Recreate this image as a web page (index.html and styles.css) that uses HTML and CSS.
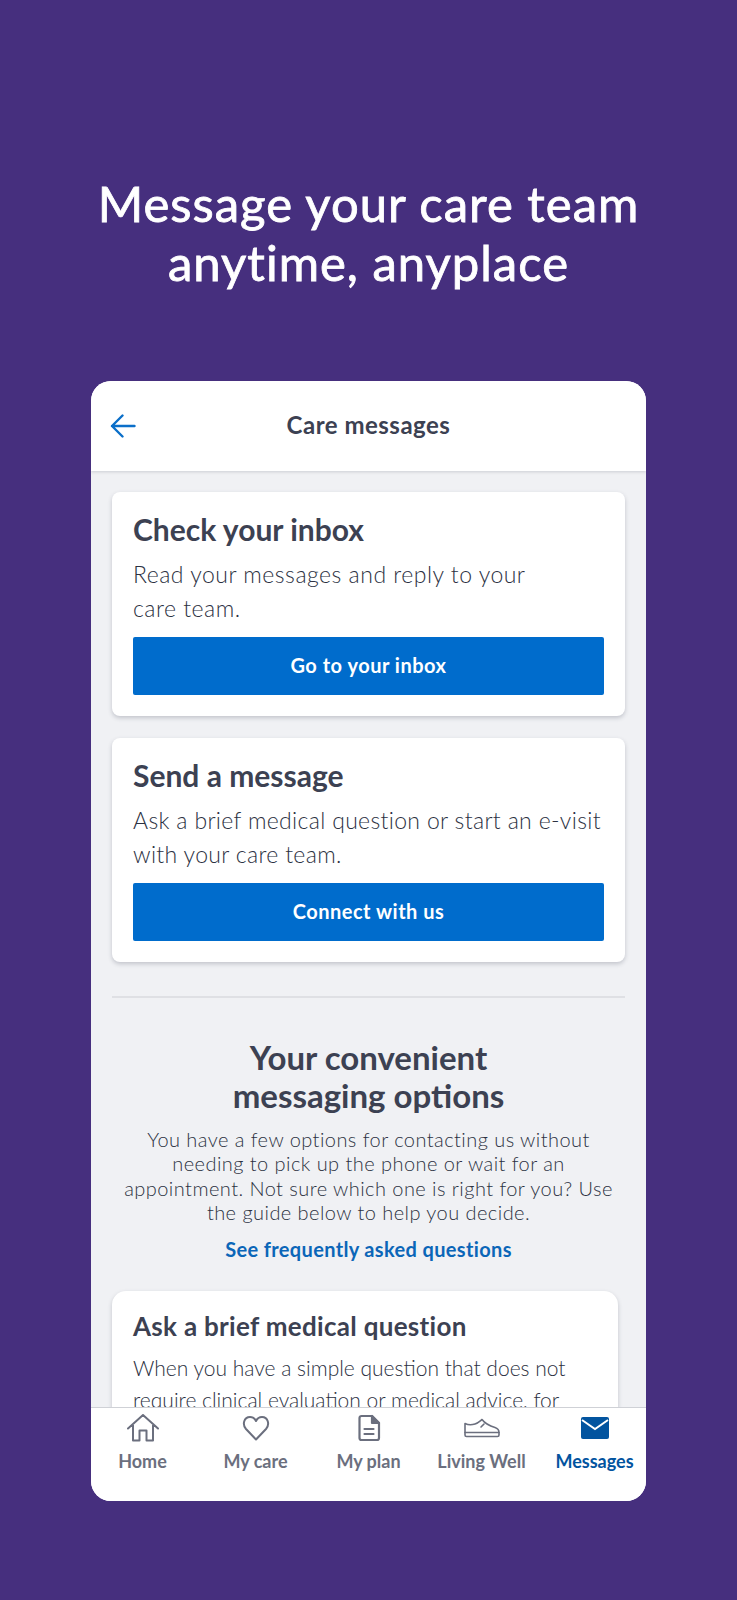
FILE: index.html
```html
<!DOCTYPE html>
<html lang="en">
<head>
  <meta charset="UTF-8" />
  <meta name="viewport" content="width=device-width, initial-scale=1.0"/>
  <title>Care messages</title>
  <link rel="stylesheet" href="styles.css">
</head>
<body>

  <h1 class="headline">Message your care team<br>anytime, anyplace</h1>

  <div class="phone">
    <header class="top-bar">
      <svg class="back" width="26" height="24" viewBox="0 0 26 24" fill="none" stroke="#0b6fc9" stroke-width="2.4" stroke-linecap="round" stroke-linejoin="round">
        <path d="M24.5 12H2M12.5 1.5 2 12l10.5 10.5"/>
      </svg>
      <span class="top-title">Care messages</span>
    </header>

    <main class="content">
      <section class="card">
        <h2>Check your inbox</h2>
        <p>Read your messages and reply to your<br>care team.</p>
        <a class="btn">Go to your inbox</a>
      </section>

      <section class="card">
        <h2>Send a message</h2>
        <p class="tight">Ask a brief medical question or start an e-visit<br>with your care team.</p>
        <a class="btn">Connect with us</a>
      </section>

      <hr class="divider">

      <div class="options">
        <h3>Your convenient<br>messaging options</h3>
        <p>You have a few options for contacting us without<br>needing to pick up the phone or wait for an<br>appointment. Not sure which one is right for you? Use<br>the guide below to help you decide.</p>
        <a class="faq">See frequently asked questions</a>
      </div>

      <section class="card card-option">
        <h2 class="small">Ask a brief medical question</h2>
        <p>When you have a simple question that does not<br>require clinical evaluation or medical advice, for</p>
      </section>
    </main>

    <nav class="tabs">
      <a class="tab">
        <svg width="32" height="28" viewBox="0 0 32 28" fill="none" stroke="currentColor" stroke-width="2" stroke-linejoin="round" stroke-linecap="round">
          <path d="M1 14.500 16 1l15 13.500M6 11v15.500h6.500V16.500h7v10H26V11"/>
        </svg>
        <span>Home</span>
      </a>
      <a class="tab">
        <svg width="28" height="28" viewBox="0 0 28 28" fill="none" stroke="currentColor" stroke-width="2" stroke-linejoin="round">
          <path d="M14 25.500 4 15C0 10.500 2 3 8 3c2.800 0 4.800 1.500 6 4 1.200-2.500 3.200-4 6-4 6 0 8 7.500 4 12Z"/>
        </svg>
        <span>My care</span>
      </a>
      <a class="tab">
        <svg width="24" height="28" viewBox="0 0 24 28" fill="none" stroke="currentColor" stroke-width="2.2" stroke-linejoin="round" stroke-linecap="round">
          <path d="M4.500 2H15l7 7v15a2 2 0 0 1-2 2H4.500a2 2 0 0 1-2-2V4a2 2 0 0 1 2-2Z"/>
          <path fill="currentColor" d="M15 2v7h7Z"/>
          <path d="M7.500 15h9M7.500 20h9"/>
        </svg>
        <span>My plan</span>
      </a>
      <a class="tab">
        <svg width="36" height="28" viewBox="0 0 36 28" fill="none" stroke="currentColor" stroke-width="1.600" stroke-linejoin="round" stroke-linecap="round">
          <path d="M1 9.500c3 1.500 7 1.500 10 .5 3-1 5-3 7-4.500 3 4 8 6.500 13 8 2.500.8 4 2 4 5H1Z"/>
          <path d="M1 18.500v2.500a1.500 1.500 0 0 0 1.500 1.500h31A1.500 1.500 0 0 0 35 21v-2.500M20 10l-3 3"/>
        </svg>
        <span>Living Well</span>
      </a>
      <a class="tab tab-active">
        <svg width="28" height="28" viewBox="0 0 28 28">
          <path fill="currentColor" d="M2 3h24a2 2 0 0 1 2 2v18a2 2 0 0 1-2 2H2a2 2 0 0 1-2-2V5a2 2 0 0 1 2-2Z"/>
          <path fill="none" stroke="#fff" stroke-width="2" d="M1 6l13 9L27 6"/>
        </svg>
        <span>Messages</span>
      </a>
    </nav>
  </div>

</body>
</html>
```

FILE: styles.css
```css
* {
  box-sizing: border-box;
}
body {
  margin: 0;
  height: 1600px;
  overflow: hidden;
  background: #462f7e;
  font-family: 'Lato', 'Open Sans', sans-serif;
  color: #3c4152;
}
.headline {
  margin: 0;
  padding-top: 174px;
  height: 381px;
  text-align: center;
  color: white;
  font-size: 49px;
  line-height: 59px;
  font-weight: 400;
  letter-spacing: 1px;
  -webkit-text-stroke: 0.8px white;
}
.phone {
  width: 555px;
  height: 1120px;
  margin-left: 91px;
  background: white;
  border-radius: 20px;
  overflow: hidden;
  display: flex;
  flex-direction: column;
}
.top-bar {
  flex: none;
  height: 90px;
  padding-bottom: 3px;
  display: flex;
  align-items: center;
  justify-content: center;
  position: relative;
  background: white;
  box-shadow: 0 1px 3px rgba(60, 65, 82, 0.2);
  z-index: 1;
}
.back {
  position: absolute;
  left: 19px;
  top: 33px;
}
.top-title {
  font-size: 24px;
  font-weight: 700;
  letter-spacing: 0.5px;
}
.content {
  flex: 1;
  overflow: hidden;
  background: #f0f1f4;
  padding: 21px 21px 0;
}
.card {
  background: white;
  border-radius: 8px;
  padding: 19px 21px 21px;
  margin-bottom: 22px;
  box-shadow: 0 2px 4px rgba(60, 65, 82, 0.25);
}
.card h2 {
  margin: 0 0 10px;
  font-size: 30px;
  line-height: 36px;
  font-weight: 700;
}
.card p {
  margin: 0 0 12px;
  font-size: 23px;
  line-height: 34px;
  font-weight: 300;
  letter-spacing: 0.5px;
  white-space: nowrap;
  color: #2c3142;
}
.card p.tight {
  letter-spacing: 0.33px;
}
.btn {
  display: block;
  height: 58px;
  line-height: 57px;
  text-align: center;
  background: #006ccc;
  color: white;
  border-radius: 2px;
  font-size: 20px;
  font-weight: 700;
  letter-spacing: 0.5px;
}
.divider {
  margin: 34px 0 0;
  border: none;
  height: 2px;
  background: #dfe0e4;
}
.options {
  text-align: center;
  padding-top: 40px;
}
.options h3 {
  margin: 0 0 13px;
  font-size: 33px;
  line-height: 38px;
  font-weight: 700;
}
.options p {
  margin: 0 0 12px;
  font-size: 20px;
  line-height: 24.300px;
  font-weight: 300;
  letter-spacing: 0.45px;
  color: #2c3142;
}
.faq {
  font-size: 20px;
  line-height: 26px;
  font-weight: 700;
  letter-spacing: 0.35px;
  color: #0b66b8;
}
.card-option {
  width: 506px;
  margin-top: 29px;
  border-radius: 14px 14px 0 0;
}
.card .small {
  font-size: 26px;
  line-height: 32px;
  margin-bottom: 10px;
  letter-spacing: 0.3px;
}
.card-option p {
  font-size: 21px;
  line-height: 32px;
  letter-spacing: 0;
}
.tabs {
  flex: none;
  height: 94px;
  display: flex;
  justify-content: center;
  background: white;
  border-top: 1px solid #cfd1d6;
  padding: 6px 0 0;
  position: relative;
}
.tab {
  flex: none;
  width: 113px;
  display: flex;
  flex-direction: column;
  align-items: center;
  color: #6b6f7e;
  font-size: 18px;
  font-weight: 700;
}
.tab svg {
  height: 28px;
  margin-bottom: 8px;
}
.tab-active {
  color: #02549f;
}
```
